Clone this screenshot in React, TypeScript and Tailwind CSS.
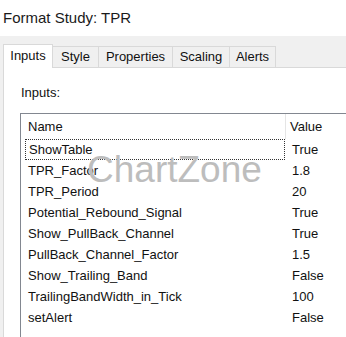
const rows: [string, string][] = [
  ["ShowTable", "True"],
  ["TPR_Factor", "1.8"],
  ["TPR_Period", "20"],
  ["Potential_Rebound_Signal", "True"],
  ["Show_PullBack_Channel", "True"],
  ["PullBack_Channel_Factor", "1.5"],
  ["Show_Trailing_Band", "False"],
  ["TrailingBandWidth_in_Tick", "100"],
  ["setAlert", "False"],
];

const tabs = ["Inputs", "Style", "Properties", "Scaling", "Alerts"];

export default function App() {
  return (
    <div
      className="relative h-[337px] w-[346px] overflow-hidden bg-white text-[13px] text-[#111]"
      style={{ fontFamily: '"Liberation Sans", Arial, sans-serif' }}
    >
      {/* Title */}
      <div className="flex h-[36px] items-center pl-[3px] text-[15px] text-[#1a1a1a]">
        Format Study: TPR
      </div>

      {/* Body */}
      <div className="h-full bg-[#f0f0f0] pl-[3px] pt-[8px]">
        {/* Tabs */}
        <div className="flex h-[23px] items-end">
          {tabs.map((t, i) =>
            i === 0 ? (
              <div
                key={t}
                className="relative z-10 -mb-px flex h-[24px] w-[50px] items-center justify-center border border-b-0 border-[#d9d9d9] bg-white pb-[2px]"
              >
                {t}
              </div>
            ) : (
              <div
                key={t}
                className={`flex h-[21px] items-center justify-center border border-l-0 border-b-0 border-[#d9d9d9] bg-[#f0f0f0] ${
                  t === "Style" ? "w-[46px]" : t === "Properties" ? "w-[74px]" : t === "Scaling" ? "w-[57px]" : "w-[46px]"
                }`}
              >
                {t}
              </div>
            )
          )}
        </div>

        {/* Panel */}
        <div className="h-full w-[400px] border-l border-t border-[#d9d9d9] bg-white pl-[16px] pt-[15px]">
          <div className="mb-[11px] h-[19px] pl-[1px] leading-[19px]">Inputs:</div>
          <div className="h-[300px] w-[360px] border border-[#828790] bg-white">
            <div className="flex h-[25px] items-center">
              <div className="w-[264px] pl-[7px]">Name</div>
              <div className="h-full w-px bg-[#e5e5e5]" />
              <div className="pl-[4px]">Value</div>
            </div>
            {rows.map(([name, value], i) => (
              <div key={name} className="flex h-[21px] items-center">
                <div
                  className={`ml-[4px] flex h-full w-[260px] items-center pl-[3px] ${
                    i === 0 ? "border border-dotted border-[#333]" : ""
                  }`}
                >
                  {name}
                </div>
                <div className="pl-[7px]">{value}</div>
              </div>
            ))}
          </div>
        </div>
      </div>

      {/* Watermark */}
      <div className="pointer-events-none absolute left-[87px] top-[151px] text-[37px] leading-none text-[#bdbdbd]">
        ChartZone
      </div>
    </div>
  );
}
